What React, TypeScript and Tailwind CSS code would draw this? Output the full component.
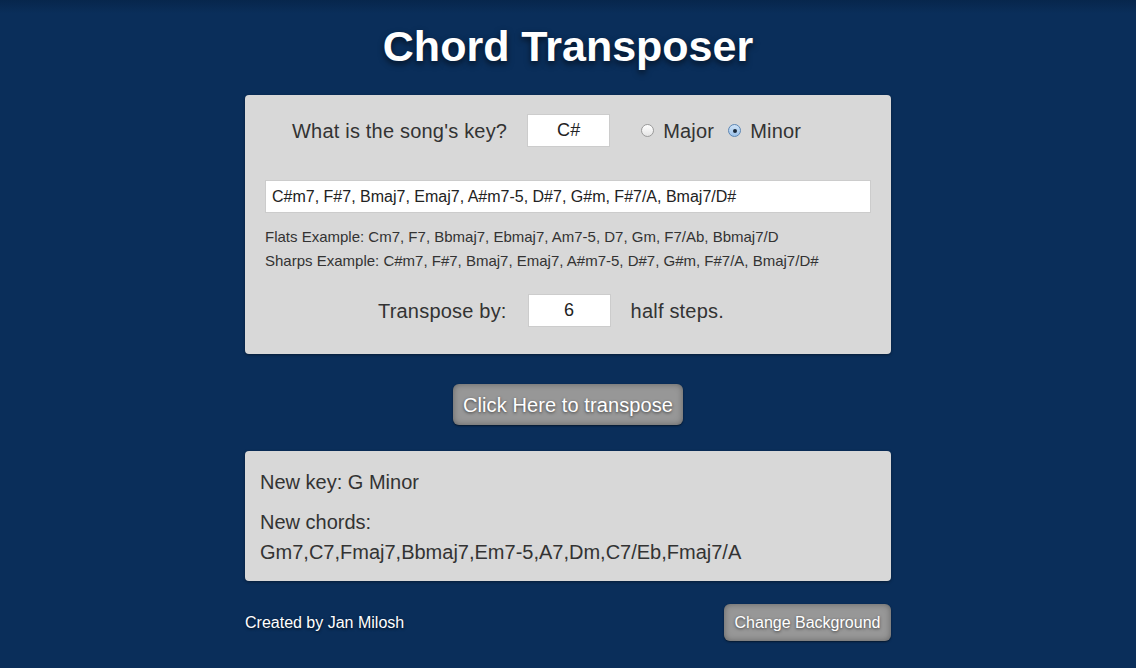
import * as React from "react";

const font = { fontFamily: '"Liberation Sans", Arial, sans-serif' };

function Radio({ checked }: { checked?: boolean }) {
  return (
    <span
      className={
        "inline-flex h-[13px] w-[13px] items-center justify-center rounded-full border " +
        (checked
          ? "border-[#5b86b5] bg-gradient-to-b from-[#cfe3f7] to-[#9cc2ea]"
          : "border-[#9a9a9a] bg-gradient-to-b from-white to-[#e4e4e4]")
      }
    >
      {checked && <span className="h-[4px] w-[4px] rounded-full bg-[#1b2a3a]" />}
    </span>
  );
}

export default function App() {
  const [key, setKey] = React.useState("C#");
  const [steps, setSteps] = React.useState("6");
  const [chords, setChords] = React.useState(
    "C#m7, F#7, Bmaj7, Emaj7, A#m7-5, D#7, G#m, F#7/A, Bmaj7/D#"
  );

  return (
    <div
      className="min-h-[668px] w-full bg-gradient-to-b from-[#07264c] via-[#0a2e5a] via-[2%] to-[#0a2e5a] text-[#333]"
      style={font}
    >
      <div className="mx-auto w-[646px] pt-[21px]">
        <h1 className="text-center text-[43px] font-bold leading-[50px] text-white [text-shadow:0_3px_6px_rgba(0,0,0,0.6)]">
          Chord Transposer
        </h1>

        {/* input panel */}
        <div className="mt-[24px] rounded-[4px] bg-[#d8d8d8] px-5 pt-[19px] pb-[27px] shadow-[0_1px_3px_rgba(0,0,0,0.4)]">
          <div className="flex items-center pl-[27px] text-[20px] tracking-[0.2px]">
            <span>What is the song's key?</span>
            <input
              value={key}
              onChange={(e) => setKey(e.target.value)}
              className="ml-[20px] h-[33px] w-[83px] border border-[#ccc] bg-white text-center text-[18px] text-[#222] outline-none"
            />
            <label className="ml-[31px] flex items-center gap-[9px]">
              <Radio />
              <span>Major</span>
            </label>
            <label className="ml-[14px] flex items-center gap-[9px]">
              <Radio checked />
              <span>Minor</span>
            </label>
          </div>

          <input
            value={chords}
            onChange={(e) => setChords(e.target.value)}
            className="mt-[33px] h-[33px] w-full border border-[#ccc] bg-white px-[6px] text-[16px] text-[#222] outline-none"
          />

          <div className="mt-[12px] text-[15px] leading-[24px]">
            <div>Flats Example: Cm7, F7, Bbmaj7, Ebmaj7, Am7-5, D7, Gm, F7/Ab, Bbmaj7/D</div>
            <div>Sharps Example: C#m7, F#7, Bmaj7, Emaj7, A#m7-5, D#7, G#m, F#7/A, Bmaj7/D#</div>
          </div>

          <div className="mt-[21px] flex items-center pl-[113px] text-[20px] tracking-[0.2px]">
            <span>Transpose by:</span>
            <input
              value={steps}
              onChange={(e) => setSteps(e.target.value)}
              className="ml-[21px] h-[33px] w-[83px] border border-[#ccc] bg-white text-center text-[18px] text-[#222] outline-none"
            />
            <span className="ml-[20px]">half steps.</span>
          </div>
        </div>

        <div className="mt-[30px] flex justify-center">
          <button className="h-[41px] w-[230px] rounded-[6px] bg-[#979797] text-[20px] tracking-[0.1px] text-white [text-shadow:0_1px_3px_rgba(0,0,0,0.6)] shadow-[inset_0_0_6px_rgba(0,0,0,0.35),0_1px_2px_rgba(0,0,0,0.5)]">
            Click Here to transpose
          </button>
        </div>

        {/* result panel */}
        <div className="mt-[26px] rounded-[4px] bg-[#d8d8d8] px-[15px] pt-[16px] pb-[14px] text-[20px] leading-[30px] shadow-[0_1px_3px_rgba(0,0,0,0.4)]">
          <div>New key: G Minor</div>
          <div className="mt-[10px]">New chords:</div>
          <div>Gm7,C7,Fmaj7,Bbmaj7,Em7-5,A7,Dm,C7/Eb,Fmaj7/A</div>
        </div>

        <div className="mt-[23px] flex items-center justify-between">
          <span className="text-[16px] text-white [text-shadow:0_1px_3px_rgba(0,0,0,0.7)]">
            Created by Jan Milosh
          </span>
          <button className="h-[37px] w-[167px] rounded-[6px] bg-[#979797] text-[16px] text-white [text-shadow:0_1px_3px_rgba(0,0,0,0.6)] shadow-[inset_0_0_6px_rgba(0,0,0,0.35),0_1px_2px_rgba(0,0,0,0.5)]">
            Change Background
          </button>
        </div>
      </div>
    </div>
  );
}
